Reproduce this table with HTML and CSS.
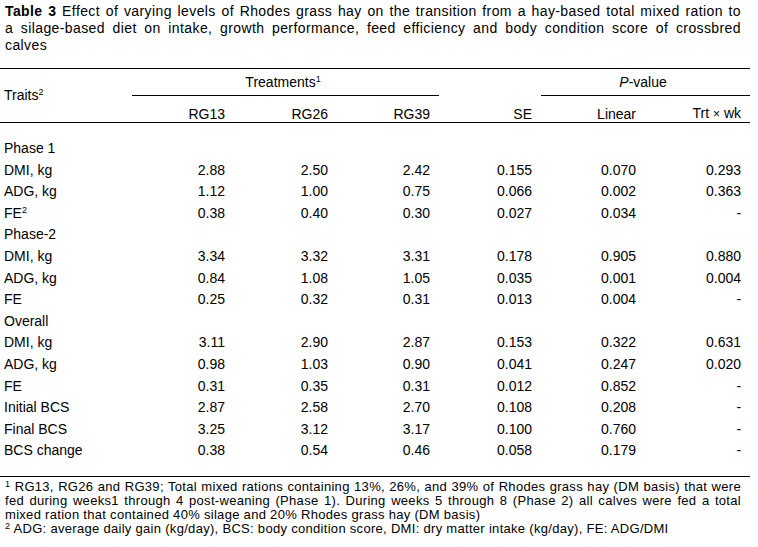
FILE: index.html
```html
<!DOCTYPE html>
<html>
<head>
<meta charset="utf-8">
<link rel="stylesheet" href="styles.css">
</head>
<body>
<div class="page">
  <div class="caption">
    <span class="jl"><b>Table 3</b> Effect of varying levels of Rhodes grass hay on the transition from a hay-based total mixed ration to</span>
    <span class="jl">a silage-based diet on intake, growth performance, feed efficiency and body condition score of crossbred</span>
    <span class="ll">calves</span>
  </div>
  <table class="data">
    <colgroup>
      <col class="c-trait"><col class="c102"><col class="c103"><col class="c102"><col class="c102"><col class="c104"><col class="c105">
    </colgroup>
    <thead>
      <tr class="h1">
        <th rowspan="2" class="trait-h">Traits<sup>2</sup></th>
        <th colspan="3" class="group">Treatments<sup>1</sup></th>
        <th></th>
        <th colspan="2" class="group"><i>P</i>-value</th>
      </tr>
      <tr class="h2">
        <th>RG13</th><th>RG26</th><th>RG39</th><th>SE</th><th>Linear</th><th>Trt <span class="times">×</span> wk</th>
      </tr>
    </thead>
    <tbody>
      <tr class="first"><td>Phase 1</td><td></td><td></td><td></td><td></td><td></td><td></td></tr>
      <tr><td>DMI, kg</td><td>2.88</td><td>2.50</td><td>2.42</td><td>0.155</td><td>0.070</td><td>0.293</td></tr>
      <tr><td>ADG, kg</td><td>1.12</td><td>1.00</td><td>0.75</td><td>0.066</td><td>0.002</td><td>0.363</td></tr>
      <tr><td>FE<sup>2</sup></td><td>0.38</td><td>0.40</td><td>0.30</td><td>0.027</td><td>0.034</td><td>-</td></tr>
      <tr><td>Phase-2</td><td></td><td></td><td></td><td></td><td></td><td></td></tr>
      <tr><td>DMI, kg</td><td>3.34</td><td>3.32</td><td>3.31</td><td>0.178</td><td>0.905</td><td>0.880</td></tr>
      <tr><td>ADG, kg</td><td>0.84</td><td>1.08</td><td>1.05</td><td>0.035</td><td>0.001</td><td>0.004</td></tr>
      <tr><td>FE</td><td>0.25</td><td>0.32</td><td>0.31</td><td>0.013</td><td>0.004</td><td>-</td></tr>
      <tr><td>Overall</td><td></td><td></td><td></td><td></td><td></td><td></td></tr>
      <tr><td>DMI, kg</td><td>3.11</td><td>2.90</td><td>2.87</td><td>0.153</td><td>0.322</td><td>0.631</td></tr>
      <tr><td>ADG, kg</td><td>0.98</td><td>1.03</td><td>0.90</td><td>0.041</td><td>0.247</td><td>0.020</td></tr>
      <tr><td>FE</td><td>0.31</td><td>0.35</td><td>0.31</td><td>0.012</td><td>0.852</td><td>-</td></tr>
      <tr><td>Initial BCS</td><td>2.87</td><td>2.58</td><td>2.70</td><td>0.108</td><td>0.208</td><td>-</td></tr>
      <tr><td>Final BCS</td><td>3.25</td><td>3.12</td><td>3.17</td><td>0.100</td><td>0.760</td><td>-</td></tr>
      <tr class="last"><td>BCS change</td><td>0.38</td><td>0.54</td><td>0.46</td><td>0.058</td><td>0.179</td><td>-</td></tr>
    </tbody>
  </table>
  <div class="notes">
    <span class="jl"><sup>1</sup> RG13, RG26 and RG39; Total mixed rations containing 13%, 26%, and 39% of Rhodes grass hay (DM basis) that were</span>
    <span class="jl">fed during weeks1 through 4 post-weaning (Phase 1). During weeks 5 through 8 (Phase 2) all calves were fed a total</span>
    <span class="ll">mixed ration that contained 40% silage and 20% Rhodes grass hay (DM basis)</span>
    <span class="ll"><sup>2</sup> ADG: average daily gain (kg/day), BCS: body condition score, DMI: dry matter intake (kg/day), FE: ADG/DMI</span>
  </div>
</div>
</body>
</html>
```
FILE: styles.css
```css
html, body {
  margin: 0;
  padding: 0;
  background: #fff;
}
.page {
  width: 758px;
  color: #000;
  font-family: "Liberation Sans", Arial, sans-serif;
  font-size: 14px;
}
.jl {
  display: block;
  white-space: nowrap;
  text-align: justify;
  text-align-last: justify;
}
.ll {
  display: block;
  white-space: nowrap;
  text-align: left;
}
.caption {
  padding: 3px 0 0 5px;
  width: 736px;
  line-height: 17px;
  letter-spacing: 0.4px;
}
.caption b {
  font-weight: bold;
}
.data {
  margin-top: 14px;
  width: 750px;
  border-collapse: collapse;
  table-layout: fixed;
  border-top: 1px solid #000;
  border-bottom: 1px solid #000;
}
.c-trait { width: 132px; }
.c102 { width: 102px; }
.c103 { width: 103px; }
.c104 { width: 104px; }
.c105 { width: 105px; }
th, td {
  padding: 0 9px 0 4px;
  font-weight: normal;
  text-align: right;
  white-space: nowrap;
}
thead th {
  height: 26px;
}
.h1 th {
  line-height: 26px;
  text-align: center;
  vertical-align: middle;
}
.h1 th.group {
  border-bottom: 1px solid #000;
}
.h1 th.trait-h {
  text-align: left;
  vertical-align: middle;
  line-height: 17px;
  padding-top: 0;
}
.h2 th {
  line-height: 15px;
  vertical-align: bottom;
}
thead {
  border-bottom: 1px solid #000;
}
.times {
  font-size: 12px;
}
sup {
  font-size: 9px;
  line-height: 0;
  vertical-align: 5px;
}
tbody td {
  line-height: 21.6px;
}
tbody td:first-child {
  text-align: left;
}
tbody tr.first td {
  padding-top: 15px;
}
tbody tr.last td {
  padding-bottom: 14px;
}
.notes {
  margin-top: 3px;
  padding-left: 5px;
  width: 736px;
  font-size: 13px;
  line-height: 13.9px;
  letter-spacing: 0.3px;
}
.notes sup {
  font-size: 9px;
  vertical-align: 4px;
}
```
